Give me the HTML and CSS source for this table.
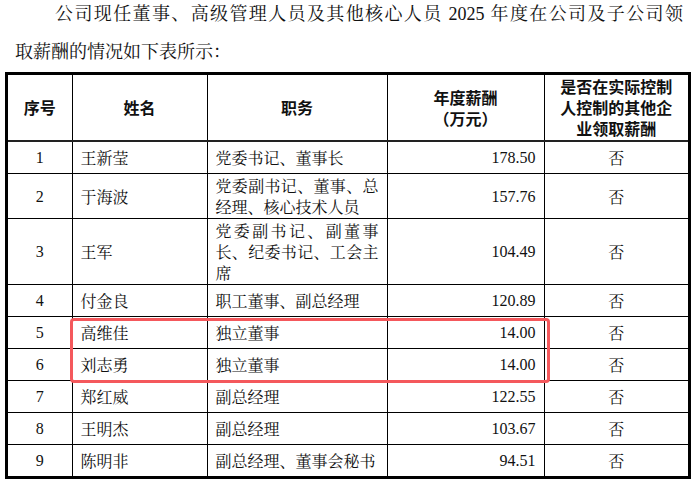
FILE: index.html
```html
<!DOCTYPE html>
<html lang="zh-CN">
<head>
<meta charset="utf-8">
<link rel="stylesheet" href="styles.css">
</head>
<body>
<div class="intro">
  <div class="line1">公司现任董事、高级管理人员及其他核心人员 <span class="num">2025</span> 年度在公司及子公司领</div>
  <div class="line2">取薪酬的情况如下表所示：</div>
</div>
<div class="table-wrap">
  <table class="pay">
    <colgroup>
      <col class="c1"><col class="c2"><col class="c3"><col class="c4"><col class="c5">
    </colgroup>
    <thead>
      <tr class="head">
        <th>序号</th>
        <th>姓名</th>
        <th>职务</th>
        <th>年度薪酬<br>（万元）</th>
        <th>是否在实际控制人控制的其他企业领取薪酬</th>
      </tr>
    </thead>
    <tbody>
      <tr><td class="idx">1</td><td class="name">王新莹</td><td class="role">党委书记、董事长</td><td class="amt">178.50</td><td class="yn">否</td></tr>
      <tr><td class="idx">2</td><td class="name">于海波</td><td class="role">党委副书记、董事、总经理、核心技术人员</td><td class="amt">157.76</td><td class="yn">否</td></tr>
      <tr><td class="idx">3</td><td class="name">王军</td><td class="role">党委副书记、副董事长、纪委书记、工会主席</td><td class="amt">104.49</td><td class="yn">否</td></tr>
      <tr><td class="idx">4</td><td class="name">付金良</td><td class="role">职工董事、副总经理</td><td class="amt">120.89</td><td class="yn">否</td></tr>
      <tr><td class="idx">5</td><td class="name">高维佳</td><td class="role">独立董事</td><td class="amt">14.00</td><td class="yn">否</td></tr>
      <tr><td class="idx">6</td><td class="name">刘志勇</td><td class="role">独立董事</td><td class="amt">14.00</td><td class="yn">否</td></tr>
      <tr><td class="idx">7</td><td class="name">郑红威</td><td class="role">副总经理</td><td class="amt">122.55</td><td class="yn">否</td></tr>
      <tr><td class="idx">8</td><td class="name">王明杰</td><td class="role">副总经理</td><td class="amt">103.67</td><td class="yn">否</td></tr>
      <tr><td class="idx">9</td><td class="name">陈明非</td><td class="role">副总经理、董事会秘书</td><td class="amt">94.51</td><td class="yn">否</td></tr>
    </tbody>
  </table>
  <div class="highlight"></div>
</div>
</body>
</html>
```

FILE: styles.css
```css
html, body {
  margin: 0;
  padding: 0;
  background: #ffffff;
}
body {
  width: 691px;
  height: 480px;
  overflow: hidden;
  color: #111;
  font-family: "Noto Serif CJK SC", "Noto Sans CJK SC", sans-serif;
}
.num, .idx, .amt {
  font-family: "Liberation Serif", serif;
}
.intro {
  padding: 0 8px 0 15px;
  font-size: 18px;
}
.line1 {
  padding-left: 40px;
  line-height: 24px;
  height: 24px;
  text-align: justify;
  text-align-last: justify;
  white-space: nowrap;
}
.line1 .num {
  font-size: 18px;
}
.line2 {
  margin-top: 14px;
  line-height: 24px;
  height: 24px;
}
.table-wrap {
  position: relative;
  margin: 10px 0 0 5px;
  width: 686px;
  border: 3px solid #000;
  box-sizing: border-box;
}
.pay {
  width: 680px;
  border-collapse: collapse;
  border-style: hidden;
  table-layout: fixed;
  font-size: 16px;
}
.c1 { width: 64px; }
.c2 { width: 135px; }
.c3 { width: 180px; }
.c4 { width: 157px; }
.c5 { width: 144px; }
.pay th, .pay td {
  border: 1px solid #000;
  padding: 1px 8px;
  line-height: 21px;
  vertical-align: middle;
}
.pay th {
  font-family: "Noto Sans CJK SC", sans-serif;
  font-weight: 700;
  text-align: center;
  height: 63px;
  border-bottom: 2px solid #222;
}
.pay td {
  height: 29px;
}
.idx { text-align: center; }
.name { text-align: left; padding-left: 10px; }
.role { text-align: justify; padding-left: 9px; padding-right: 5px; }
.amt { text-align: right; padding-right: 9px; }
.yn { text-align: center; }
.highlight {
  position: absolute;
  left: 62px;
  top: 243px;
  width: 480px;
  height: 65px;
  box-sizing: border-box;
  border: 3px solid #f4585c;
  border-radius: 4px;
  pointer-events: none;
}
```
